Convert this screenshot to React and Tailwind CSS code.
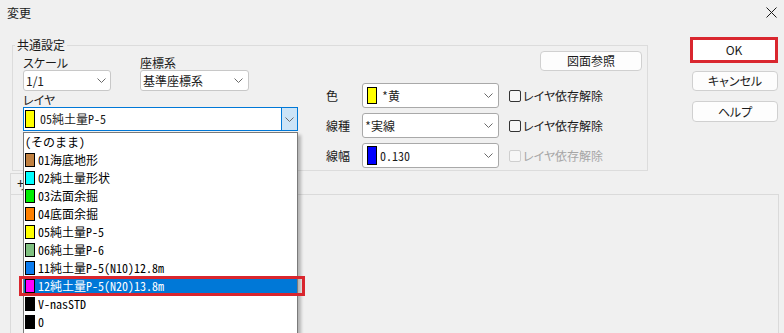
import React from "react";

const MONO =
  "font-['Noto_Sans_Mono_CJK_JP','Noto_Sans_CJK_JP',monospace] [font-feature-settings:normal]";

function Chevron() {
  return (
    <svg width="9" height="5" viewBox="0 0 9 5" className="shrink-0">
      <path d="M0.5 0.5 L4.5 4.5 L8.5 0.5" fill="none" stroke="#6a6a6a" strokeWidth="1" />
    </svg>
  );
}

function Checkbox({ disabled }) {
  return (
    <div className="flex items-center ml-[10px]">
      <span
        className={
          disabled
            ? "w-[12px] h-[12px] rounded-[2px] border border-[#cfcfcf] bg-[#f7f7f7]"
            : "w-[12px] h-[12px] rounded-[2px] border border-[#333333] bg-[#f7f7f7]"
        }
      />
      <span
        className={
          disabled
            ? "ml-[2px] text-[12px] leading-[16px] text-[#a6a6a6]"
            : "ml-[2px] text-[12px] leading-[16px] text-[#1a1a1a]"
        }
      >
        レイヤ依存解除
      </span>
    </div>
  );
}

const ITEMS = [
  { text: "(そのまま)", sw: null },
  { text: "01海底地形", sw: "bg-[#c08040]" },
  { text: "02純土量形状", sw: "bg-[#00ffff]" },
  { text: "03法面余掘", sw: "bg-[#00ee00]" },
  { text: "04底面余掘", sw: "bg-[#ff8000]" },
  { text: "05純土量P-5", sw: "bg-[#ffff00]" },
  { text: "06純土量P-6", sw: "bg-[#80c080]" },
  { text: "11純土量P-5(N10)12.8m", sw: "bg-[#0a7cf0]" },
  { text: "12純土量P-5(N20)13.8m", sw: "bg-[#ff00ff]", sel: true },
  { text: "V-nasSTD", sw: "bg-black" },
  { text: "0", sw: "bg-black" },
  { text: "", sw: "bg-black" },
];

function ListRow({ item }) {
  return (
    <div
      className={
        item.sel
          ? "relative h-[18px] flex items-center bg-[#0078d7] text-white"
          : "relative h-[18px] flex items-center text-black"
      }
    >
      {item.sw ? (
        <>
          <span className={"ml-[1px] w-[10px] h-[14px] border border-black shrink-0 " + item.sw} />
          <span className={"ml-[3px] text-[12px] leading-[18px] whitespace-nowrap " + MONO}>
            {item.text}
          </span>
        </>
      ) : (
        <span className={"ml-[1px] text-[12px] leading-[18px] whitespace-nowrap " + MONO}>
          {item.text}
        </span>
      )}
      {item.sel && (
        <span className="absolute -left-[5px] -right-[8px] -top-[1px] -bottom-[1px] border-[3px] border-[#d9262e]" />
      )}
    </div>
  );
}

function PropRow({ label, children, disabled }) {
  return (
    <div className="h-[25px] flex items-center">
      <span className="w-[36px] text-[12px] leading-[16px] text-[#1a1a1a]">{label}</span>
      <div className="w-[137px] h-[25px] bg-white border border-[#a9a9a9] rounded-[3px] flex items-center pr-[5px]">
        <div className="flex-1 flex items-center min-w-0">{children}</div>
        <Chevron />
      </div>
      <Checkbox disabled={disabled} />
    </div>
  );
}

export default function App() {
  return (
    <div className="w-[784px] h-[333px] overflow-hidden bg-[#f0f0f0] text-[#1a1a1a] font-['Noto_Sans_CJK_JP',sans-serif] [font-feature-settings:'palt']">
      {/* title bar */}
      <div className="h-[30px] flex items-start justify-between">
        <span className="ml-[7px] mt-[4px] text-[12px] leading-[17px]">変更</span>
        <svg width="11" height="11" viewBox="0 0 11 11" className="mt-[7px] mr-[7px]">
          <path d="M0.5 0.5 L10.5 10.5 M10.5 0.5 L0.5 10.5" stroke="#1a1a1a" strokeWidth="1" />
        </svg>
      </div>

      {/* top row */}
      <div className="flex">
        {/* group box */}
        <div className="relative ml-[12px] mt-[15px] w-[636px] h-[126px] border border-[#dcdcdc]">
          <span className="absolute -top-[9px] left-[2px] px-[2px] bg-[#f0f0f0] text-[12px] leading-[16px]">
            共通設定
          </span>
          <div className="flex pl-[10px]">
            {/* left part */}
            <div className="w-[275px] flex flex-col">
              <div className="flex mt-[9px]">
                <div className="w-[88px] flex flex-col">
                  <span className="text-[12px] leading-[15px]">スケール</span>
                  <div className="h-[21px] bg-white border border-[#c8c8c8] rounded-[3px] flex items-center pl-[2px] pr-[4px]">
                    <span className="flex-1 text-[12px] leading-[16px]">1/1</span>
                    <Chevron />
                  </div>
                </div>
                <div className="ml-[29px] w-[109px] flex flex-col">
                  <span className="text-[12px] leading-[15px]">座標系</span>
                  <div className="h-[21px] bg-white border border-[#c8c8c8] rounded-[3px] flex items-center pl-[2px] pr-[5px]">
                    <span className="flex-1 text-[12px] leading-[16px]">基準座標系</span>
                    <Chevron />
                  </div>
                </div>
              </div>
              <span className="mt-[1px] text-[12px] leading-[15px]">レイヤ</span>
              {/* layer combo with open list */}
              <div className="relative z-10 h-[24px] bg-white border border-[#0078d7] flex">
                <div className="flex-1 flex items-center">
                  <span className="ml-[1px] w-[10px] h-[18px] border border-black bg-[#ffff00]" />
                  <span className={"ml-[5px] text-[12px] leading-[16px] " + MONO}>05純土量P-5</span>
                </div>
                <div className="w-[16px] bg-[#cce4f7] border-l border-[#0078d7] flex items-center justify-center">
                  <Chevron />
                </div>
                <div className="absolute left-[-1px] top-[24px] w-[275px] h-[230px] bg-white border border-[#7a7a7a] shadow-[3px_3px_3px_rgba(0,0,0,0.25)]">
                  {ITEMS.map((it, i) => (
                    <ListRow key={i} item={it} />
                  ))}
                </div>
              </div>
            </div>

            {/* right part */}
            <div className="ml-[28px] flex-1 flex flex-col">
              <div className="self-end mr-[5px] mt-[5px] w-[102px] h-[20px] bg-[#fdfdfd] border border-[#d0d0d0] rounded-[4px] flex items-center justify-center text-[12px] leading-[16px]">
                図面参照
              </div>
              <div className="mt-[12px] flex flex-col gap-[5px]">
                <PropRow label="色">
                  <span className="ml-[4px] w-[10px] h-[17px] border border-black bg-[#ffff00]" />
                  <span className={"ml-[5px] text-[12px] leading-[16px] " + MONO}>*黄</span>
                </PropRow>
                <PropRow label="線種">
                  <span className={"ml-[2px] text-[12px] leading-[16px] " + MONO}>*実線</span>
                </PropRow>
                <PropRow label="線幅" disabled>
                  <span className="ml-[4px] w-[10px] h-[19px] border border-black bg-[#0000ff]" />
                  <span className={"ml-[3px] text-[12px] leading-[16px] " + MONO}>0.130</span>
                </PropRow>
              </div>
            </div>
          </div>
        </div>

        {/* buttons */}
        <div className="ml-[42px] mt-[7px] w-[88px] flex flex-col">
          <div className="h-[26px] border-[3px] border-[#d9262e] bg-white flex items-center justify-center text-[12px] leading-[16px]">
            OK
          </div>
          <div className="ml-[2px] mt-[8px] w-[86px] h-[20px] bg-[#fdfdfd] border border-[#d0d0d0] rounded-[4px] flex items-center justify-center text-[12px] leading-[16px]">
            キャンセル
          </div>
          <div className="ml-[2px] mt-[10px] w-[86px] h-[21px] bg-[#fdfdfd] border border-[#d0d0d0] rounded-[4px] flex items-center justify-center text-[12px] leading-[16px]">
            ヘルプ
          </div>
        </div>
      </div>

      {/* tab control */}
      <div className="ml-[10px] mt-[2px] w-[769px] flex flex-col">
        <div className="w-[70px] h-[22px] border-t border-l border-r border-[#d9d9d9] flex items-center pl-[6px] text-[12px] leading-[16px]">
          サイズ
        </div>
        <div className="-mt-px h-[200px] border border-[#dadada] bg-[#f0f0f0]" />
      </div>
    </div>
  );
}
